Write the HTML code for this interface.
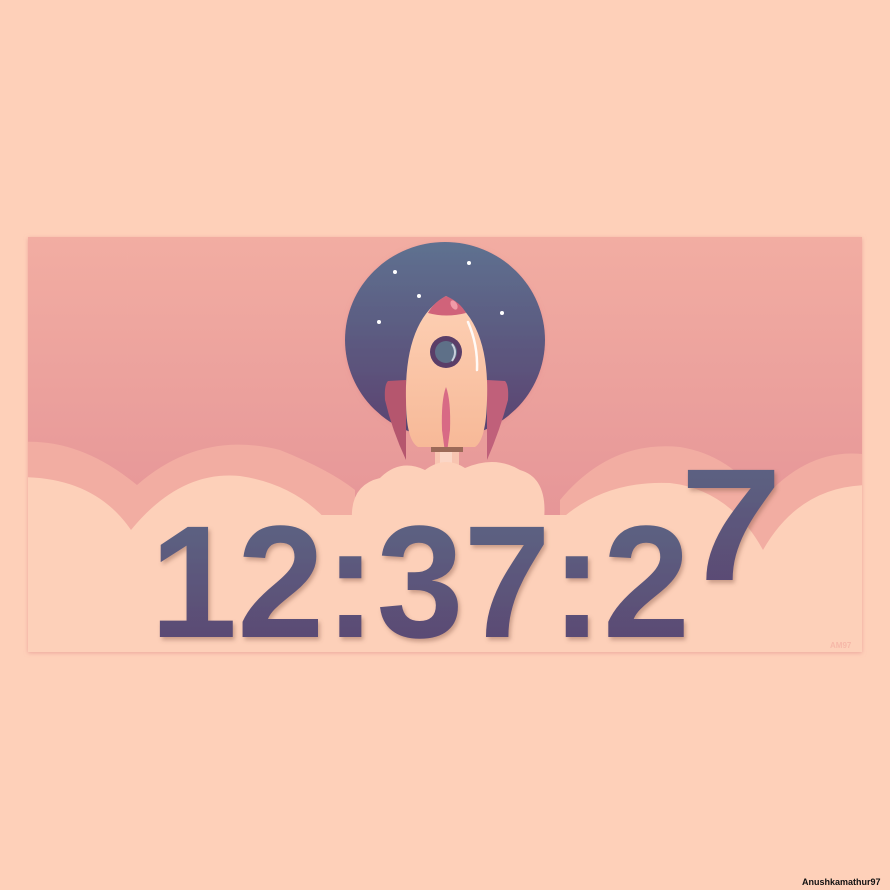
<!DOCTYPE html>
<html><head><meta charset="utf-8"><style>
html,body{margin:0;padding:0;background:#fed0b9;width:890px;height:890px;overflow:hidden}
svg{display:block}
</style></head><body>
<svg width="890" height="890" viewBox="0 0 890 890" xmlns="http://www.w3.org/2000/svg">
<defs>
<linearGradient id="sky" x1="0" y1="0" x2="0" y2="1">
<stop offset="0" stop-color="#f2ada2"/><stop offset="1" stop-color="#e08b93"/></linearGradient>
<linearGradient id="space" x1="0" y1="0" x2="0" y2="1">
<stop offset="0" stop-color="#5e7190"/><stop offset="1" stop-color="#5a4270"/></linearGradient>
<linearGradient id="txt" x1="0" y1="0" x2="0" y2="1">
<stop offset="0" stop-color="#5c6886"/><stop offset="1" stop-color="#5a4470"/></linearGradient>
<linearGradient id="body" x1="0" y1="0" x2="0" y2="1">
<stop offset="0" stop-color="#fdd0b4"/><stop offset="1" stop-color="#f7b998"/></linearGradient>
<filter id="sh" x="-10%" y="-10%" width="120%" height="130%"><feDropShadow dx="2" dy="3" stdDeviation="2" flood-color="#8a5a4a" flood-opacity="0.45"/></filter>
<filter id="cs"><feDropShadow dx="0" dy="1" stdDeviation="2" flood-color="#e08a8a" flood-opacity="0.6"/></filter>
<clipPath id="card"><rect x="28" y="237" width="834" height="415"/></clipPath>
</defs>
<rect x="28" y="237" width="834" height="415" fill="url(#sky)" filter="url(#cs)"/>
<g clip-path="url(#card)">
<path d="M0 445 Q70 430 137 485 Q200 430 280 450 Q330 470 355 490 L355 660 L0 660 Z" fill="#f2ada2"/>
<path d="M560 500 Q610 440 680 447 Q730 455 762 500 Q810 445 870 455 L870 660 L560 660 Z" fill="#f2ada2"/>
<path d="M0 478 Q90 470 131 530 Q180 470 240 476 Q300 485 335 530 L360 660 L0 660 Z" fill="#fdd0b9"/>
<path d="M555 525 Q600 480 670 483 Q730 490 763 550 Q800 485 870 485 L870 660 L555 660 Z" fill="#fdd0b9"/>
<rect x="300" y="515" width="300" height="150" fill="#fdd0b9"/>
<ellipse cx="445" cy="340" rx="100" ry="98" fill="url(#space)" filter="url(#cs)"/>
<g fill="#fff"><circle cx="395" cy="272" r="2"/><circle cx="469" cy="263" r="2"/><circle cx="419" cy="296" r="2"/><circle cx="379" cy="322" r="2"/><circle cx="502" cy="313" r="2"/></g>
<path d="M406 380 L388 381 Q384 385 385 400 Q392 430 406 460 Z" fill="#b5566e"/>
<path d="M487 380 L505 381 Q509 385 508 400 Q500 430 487 460 Z" fill="#c0607a"/>
<path d="M446 296 Q490 320 487 400 Q486 440 475 447 L418 447 Q406 440 406 400 Q404 320 446 296 Z" fill="url(#body)"/>
<path d="M446 296 Q460 302 466 313 Q446 318 428 313 Q434 302 446 296 Z" fill="#d0637a"/>
<ellipse cx="454" cy="305" rx="3" ry="5" fill="#f09aa8" transform="rotate(-30 454 305)"/>
<path d="M468 322 Q478 345 477 370" stroke="#fff" stroke-width="2.5" fill="none" stroke-linecap="round" opacity="0.9"/>
<circle cx="446" cy="352" r="16" fill="#5a3e68"/><circle cx="446" cy="352" r="11" fill="#5e7088"/>
<path d="M452 344 Q458 352 452 361" stroke="#c8d0dc" stroke-width="2" fill="none"/>
<path d="M446 387 Q451 400 450 430 L446 460 L442 430 Q441 400 446 387 Z" fill="#d86a85"/>
<rect x="431" y="447" width="32" height="5" fill="#9c6a58"/>
<rect x="435" y="452" width="24" height="20" fill="#f8c4b0"/>
<rect x="440" y="452" width="12" height="20" fill="#fbd6c6"/>
<path d="M352 520 Q350 485 380 478 Q400 458 425 470 Q445 455 465 468 Q495 455 520 470 Q548 478 544 520 Z" fill="#fdd0b9"/>
<g fill="url(#txt)" filter="url(#sh)" font-family="Liberation Sans, sans-serif" font-weight="bold">
<text x="150" y="637" font-size="160" textLength="540" lengthAdjust="spacingAndGlyphs">12:37:2</text>
<text x="0" y="0" font-size="160" transform="translate(680 580) scale(1.15 1)">7</text>
</g>
<text x="830" y="648" font-family="Liberation Sans, sans-serif" font-weight="bold" font-size="8" fill="#f6b8a8">AM97</text>
</g>
<text x="802" y="885" font-family="Liberation Sans, sans-serif" font-weight="bold" font-size="9" fill="#111">Anushkamathur97</text>
</svg>
</body></html>
